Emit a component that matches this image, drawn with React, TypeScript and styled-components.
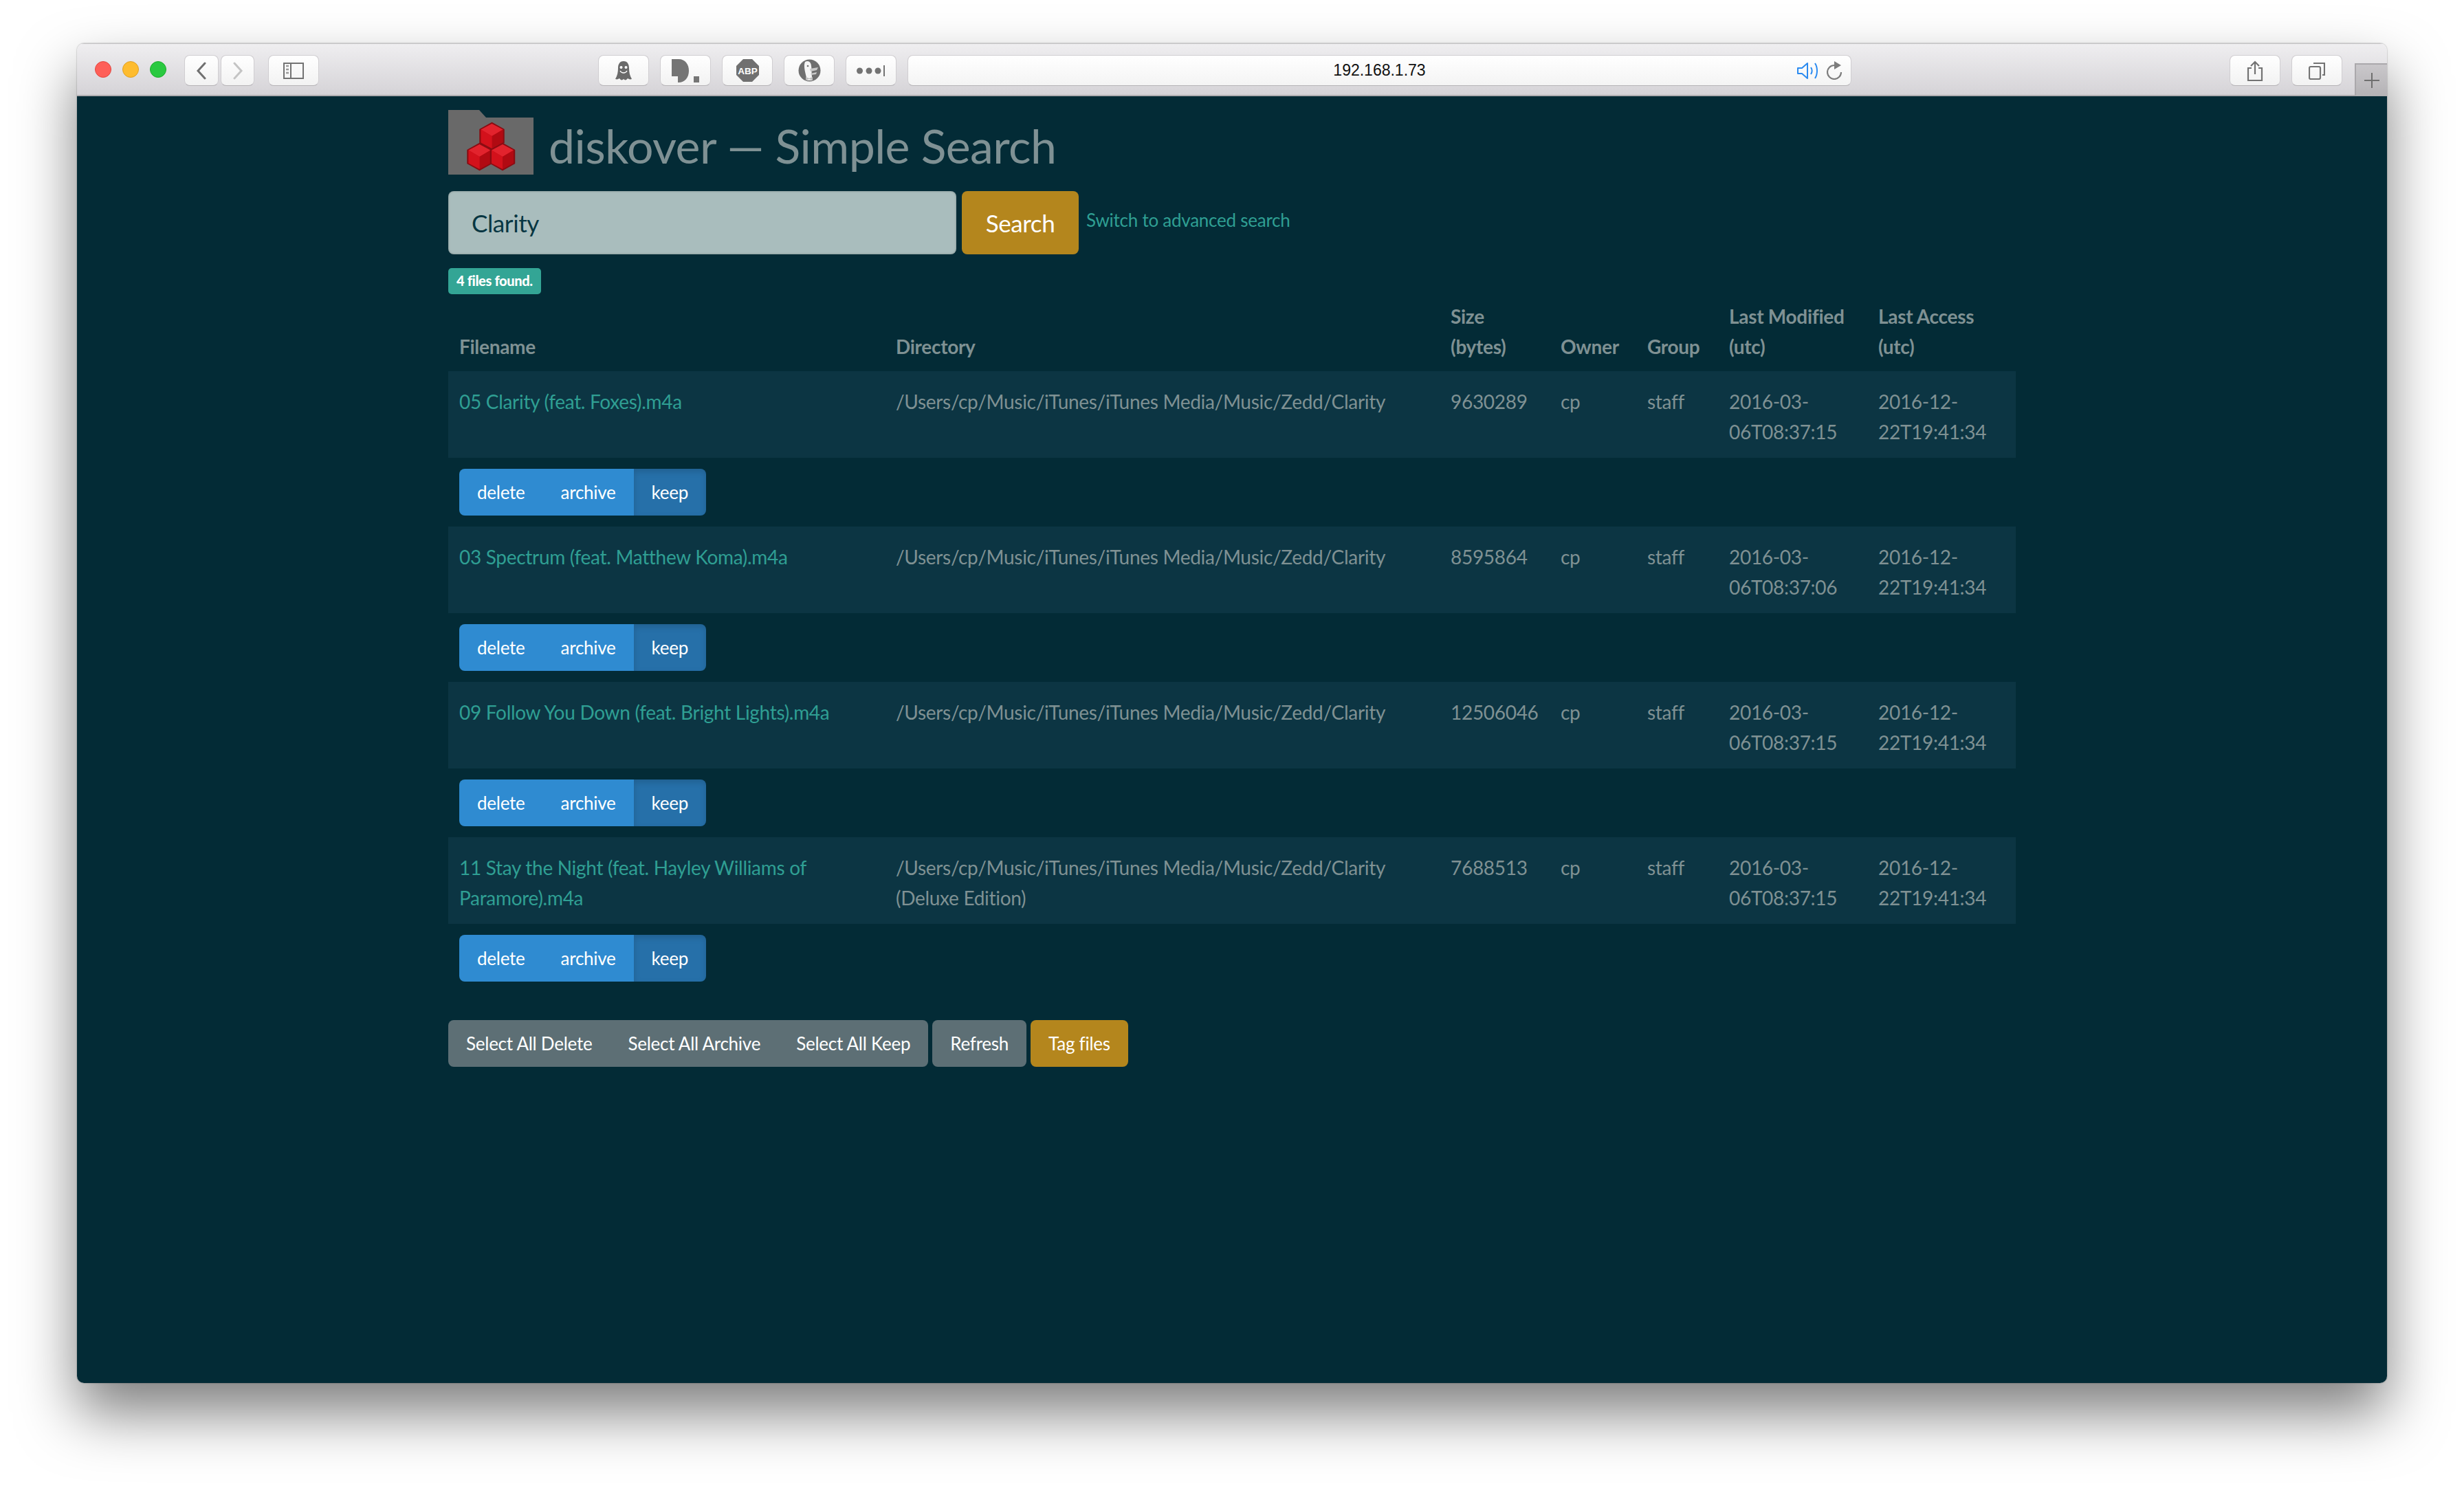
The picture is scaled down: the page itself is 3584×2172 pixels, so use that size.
import styled, { createGlobalStyle } from "styled-components";

const GlobalStyle = createGlobalStyle`
  html, body {
    margin: 0;
    padding: 0;
    background: #ffffff;
  }
`;

const Desktop = styled.div`
  width: 3584px;
  height: 2172px;
  padding: 63px 112px 160px;
  box-sizing: border-box;
  overflow: hidden;
  background: #ffffff;
`;

const Window = styled.div`
  height: 1949px;
  display: flex;
  flex-direction: column;
  border-radius: 10px;
  overflow: hidden;
  box-shadow: 0 44px 84px rgba(0, 0, 0, 0.5), 0 0 2px rgba(0, 0, 0, 0.4);
`;

const Toolbar = styled.div`
  height: 77px;
  flex: none;
  box-sizing: border-box;
  padding: 16px 0 0 26px;
  display: flex;
  align-items: flex-start;
  background: linear-gradient(#efeef0, #d5d3d7);
  border-top: 1px solid #c4c3c5;
  border-bottom: 2px solid #b0aeb1;
`;

const Lights = styled.div`
  display: flex;
  gap: 16px;
  margin: 9px 26px 0 0;
`;

const Light = styled.span<{ $color: string; $edge: string }>`
  width: 24px;
  height: 24px;
  border-radius: 50%;
  box-sizing: border-box;
  background: ${({ $color }) => $color};
  border: 1px solid ${({ $edge }) => $edge};
`;

const ToolButton = styled.div<{ $width?: number; $gap?: number }>`
  width: ${({ $width }) => $width ?? 74}px;
  height: 45px;
  flex: none;
  box-sizing: border-box;
  margin-right: ${({ $gap }) => $gap ?? 16}px;
  display: flex;
  align-items: center;
  justify-content: center;
  border-radius: 8px;
  background: linear-gradient(#ffffff, #f2f2f2);
  border: 1px solid #d0ced1;
  border-bottom-color: #b5b3b6;
`;

const Spacer = styled.div<{ $width: number }>`
  width: ${({ $width }) => $width}px;
  flex: none;
`;

const AddressBar = styled.div`
  flex: 1;
  height: 45px;
  box-sizing: border-box;
  margin-right: 550px;
  padding: 0 12px;
  position: relative;
  display: flex;
  align-items: center;
  justify-content: center;
  border-radius: 8px;
  background: linear-gradient(#ffffff, #f4f4f4);
  border: 1px solid #d0ced1;
  border-bottom-color: #b5b3b6;
  font: 23px "Liberation Sans", Arial, sans-serif;
  color: #111111;
`;

const AddressIcons = styled.div`
  position: absolute;
  right: 12px;
  top: 8px;
  display: flex;
  align-items: center;
  gap: 12px;
`;

const NewTab = styled.div`
  width: 47px;
  height: 47px;
  flex: none;
  box-sizing: border-box;
  margin: 12px 0 0 1px;
  display: flex;
  align-items: center;
  justify-content: center;
  background: linear-gradient(#c9c7ca, #b5b3b6);
  border-top: 2px solid #aaa8ab;
  border-left: 2px solid #aaa8ab;
`;

const Content = styled.main`
  flex: 1;
  background: #032b36;
  padding-top: 20px;
  font-family: Lato, "Source Sans Pro", "Noto Sans", sans-serif;
  color: #7f9193;
`;

const Container = styled.div`
  width: 2280px;
  margin: 0 auto;
`;

const Heading = styled.h1`
  margin: 0;
  height: 94px;
  display: flex;
  align-items: flex-end;
  gap: 22px;
  font-size: 68px;
  font-weight: 400;
  line-height: 84px;
  letter-spacing: -0.6px;
  color: #7f9194;
`;

const SearchForm = styled.form`
  margin-top: 24px;
  display: flex;
  gap: 8px;
`;

const SearchInput = styled.input`
  width: 739px;
  height: 92px;
  box-sizing: border-box;
  padding: 0 34px;
  border: 0;
  border-radius: 8px;
  box-shadow: inset 0 0 3px rgba(0, 0, 0, 0.3);
  background: #a9bdbd;
  color: #073642;
  font: 400 35px Lato, sans-serif;
  letter-spacing: -0.4px;
  outline: none;
`;

const SearchButton = styled.button`
  width: 170px;
  height: 92px;
  padding: 0;
  border: 0;
  border-radius: 8px;
  background: #b4861d;
  color: #ffffff;
  font: 400 35px Lato, sans-serif;
  letter-spacing: -0.4px;
`;

const SwitchLink = styled.a`
  margin: 22px 0 0 3px;
  font-size: 26px;
  line-height: 40px;
  color: #2f9f93;
  letter-spacing: -0.25px;
`;

const Badge = styled.span`
  display: block;
  width: fit-content;
  height: 38px;
  box-sizing: border-box;
  margin-top: 20px;
  padding: 0 12px;
  border-radius: 5px;
  background: #33a595;
  color: #ffffff;
  font-size: 20px;
  font-weight: 900;
  line-height: 37px;
  letter-spacing: -0.35px;
`;

const ResultTable = styled.table`
  width: 2280px;
  table-layout: fixed;
  border-collapse: collapse;
  font-size: 28px;
  line-height: 44px;
  letter-spacing: -0.3px;
`;

const HeaderCell = styled.th`
  padding: 10px 16px 14px;
  vertical-align: bottom;
  text-align: left;
  font-weight: 700;
`;

const DataRow = styled.tr`
  background: #0c3543;

  &:first-child td {
    padding-top: 22px;
  }
`;

const DataCell = styled.td`
  padding: 20px 16px 16px;
  vertical-align: top;
  overflow-wrap: anywhere;
`;

const FileLink = styled.a`
  color: #2f9f93;
`;

const ActionCell = styled.td`
  height: 100px;
  box-sizing: border-box;
  padding: 16px;
  vertical-align: top;
`;

const ButtonGroup = styled.div`
  display: inline-flex;
  border-radius: 8px;
  overflow: hidden;
`;

const ActionButton = styled.button<{ $active?: boolean }>`
  height: 68px;
  padding: 0 26px;
  border: 0;
  background: ${({ $active }) => ($active ? "#2670a9" : "#2f8bd1")};
  box-shadow: ${({ $active }) =>
    $active ? "inset 0 4px 10px rgba(0, 0, 0, 0.15)" : "none"};
  color: #ffffff;
  font: 400 26px Lato, sans-serif;
  letter-spacing: -0.25px;
`;

const BulkBar = styled.div`
  margin-top: 40px;
  display: flex;
  gap: 6px;
`;

const BulkButton = styled.button<{ $gold?: boolean }>`
  height: 68px;
  padding: 0 26px;
  border: 0;
  background: ${({ $gold }) => ($gold ? "#b4861d" : "#5d6f75")};
  border-radius: ${({ $gold }) => ($gold ? "8px" : "0")};
  color: #ffffff;
  font: 400 26px Lato, sans-serif;
  letter-spacing: -0.25px;
`;

const LoneButton = styled(BulkButton)`
  border-radius: 8px;
`;

const files = [
  {
    name: "05 Clarity (feat. Foxes).m4a",
    dir: "/Users/cp/Music/iTunes/iTunes Media/Music/Zedd/Clarity",
    size: "9630289",
    modified: "2016-03-06T08:37:15",
  },
  {
    name: "03 Spectrum (feat. Matthew Koma).m4a",
    dir: "/Users/cp/Music/iTunes/iTunes Media/Music/Zedd/Clarity",
    size: "8595864",
    modified: "2016-03-06T08:37:06",
  },
  {
    name: "09 Follow You Down (feat. Bright Lights).m4a",
    dir: "/Users/cp/Music/iTunes/iTunes Media/Music/Zedd/Clarity",
    size: "12506046",
    modified: "2016-03-06T08:37:15",
  },
  {
    name: "11 Stay the Night (feat. Hayley Williams of Paramore).m4a",
    dir: "/Users/cp/Music/iTunes/iTunes Media/Music/Zedd/Clarity (Deluxe Edition)",
    size: "7688513",
    modified: "2016-03-06T08:37:15",
  },
];

const columns = [635, 807, 160, 126, 119, 217, 216];
const GREY = "#737373";

const Cube = ({ x, y }: { x: number; y: number }) => (
  <g transform={`translate(${x} ${y})`}>
    <path d="M0-19 17-9.500V9.500L0 19-17 9.500V-9.500Z" fill="#c40d16" stroke="#8a0c12" strokeWidth="2.500" strokeLinejoin="round" />
    <path d="M0-18 16-9.500 0 0-16-9.500Z" fill="#e2232d" />
    <path d="M0 0 16-9.500V9.500L0 18Z" fill="#b10a12" />
    <path d="M0 0-16-9.500V9.500L0 18Z" fill="#d3111b" />
  </g>
);

const Logo = () => (
  <svg width="124" height="94" viewBox="0 0 124 94">
    <path d="M0 0H45L55 11H124V94H0Z" fill="#696969" />
    <Cube x={63.500} y={38} />
    <Cube x={45.500} y={68} />
    <Cube x={79} y={68} />
  </svg>
);

const BackIcon = ({ color }: { color: string }) => (
  <svg width="16" height="26" viewBox="0 0 16 26">
    <path d="M13 2 3 13 13 24" fill="none" stroke={color} strokeWidth="3" strokeLinecap="round" />
  </svg>
);

const ForwardIcon = ({ color }: { color: string }) => (
  <svg width="16" height="26" viewBox="0 0 16 26">
    <path d="M3 2 13 13 3 24" fill="none" stroke={color} strokeWidth="3" strokeLinecap="round" />
  </svg>
);

const SidebarIcon = () => (
  <svg width="30" height="24" viewBox="0 0 30 24">
    <rect x="1" y="1" width="28" height="22" fill="none" stroke={GREY} strokeWidth="2" />
    <path d="M11 1V23" stroke={GREY} strokeWidth="2" />
    <path d="M4 5H8M4 10H8M4 15H8" stroke={GREY} strokeWidth="2.500" opacity="0.7" />
  </svg>
);

const GhostIcon = () => (
  <svg width="24" height="28" viewBox="0 0 24 28">
    <path d="M12 0C18 0 20 5 20 10C20 16 21 21 24 26C21 27 20 26 18 25C16 28 14 28 12 26C10 28 8 28 6 25C4 26 3 27 0 26C3 21 4 16 4 10C4 5 6 0 12 0Z" fill="#6a6a6a" />
    <circle cx="8.500" cy="9" r="2" fill="#fff" />
    <circle cx="15.500" cy="9" r="2" fill="#fff" />
    <path d="M7 14C9 18 15 18 17 14" fill="none" stroke="#fff" strokeWidth="1.300" />
  </svg>
);

const DIcon = () => (
  <svg width="40" height="34" viewBox="0 0 40 34">
    <path d="M0 0H10C20 0 25 8 25 17C25 27 19 34 10 34H9V25H0Z" fill="#757575" />
    <path d="M32 25H40V34H32Z" fill="#757575" />
  </svg>
);

const AbpIcon = () => (
  <svg width="33" height="33" viewBox="0 0 33 33">
    <path d="M10 0H23L33 10V23L23 33H10L0 23V10Z" fill="#707070" />
    <text x="16.500" y="21.500" textAnchor="middle" fontFamily="'Liberation Sans', sans-serif" fontWeight="700" fontSize="13.500" fill="#fff">
      ABP
    </text>
  </svg>
);

const DuckIcon = () => (
  <svg width="33" height="33" viewBox="0 0 33 33">
    <circle cx="16.500" cy="16.500" r="16" fill="#6f6f6f" />
    <path d="M10 4C15 1 19 5 19 10C20 16 19 24 21 31L13 31C11 22 7 10 10 4Z" fill="#f4f4f4" />
    <circle cx="14" cy="10" r="1.300" fill="#6f6f6f" />
    <path d="M17 14 29 12 27 16 18 18Z" fill="#c9c9c9" />
    <path d="M18 21 27 19 26 22 19 23Z" fill="#c9c9c9" />
    <path d="M11 26 16 28 21 26V31L16 29 11 31Z" fill="#bdbdbd" />
  </svg>
);

const LastPassIcon = () => (
  <svg width="42" height="18" viewBox="0 0 42 18" style={{ overflow: "visible" }}>
    <circle cx="4.500" cy="9" r="4.500" fill={GREY} />
    <circle cx="18" cy="9" r="4.500" fill={GREY} />
    <circle cx="31" cy="9" r="4.500" fill={GREY} />
    <path d="M40 1V17" stroke={GREY} strokeWidth="2" />
  </svg>
);

const VolumeIcon = () => (
  <svg width="31" height="26" viewBox="0 0 31 26">
    <path d="M1 9H7L15 2V24L7 17H1Z" fill="none" stroke="#2a8af0" strokeWidth="2" strokeLinejoin="round" />
    <path d="M20 8C22 11 22 15 20 18" fill="none" stroke="#2a8af0" strokeWidth="2" />
    <path d="M26 2C30 8 30 18 26 24" fill="none" stroke="#2a8af0" strokeWidth="2" />
  </svg>
);

const ReloadIcon = () => (
  <svg width="23" height="27" viewBox="0 0 23 27">
    <path d="M11 6A10 10 0 1 0 21 16" fill="none" stroke="#7d7d7d" strokeWidth="2.200" />
    <path d="M11 0 21 6 11 12Z" fill="#7d7d7d" />
  </svg>
);

const ShareIcon = () => (
  <svg width="24" height="30" viewBox="0 0 24 30">
    <path d="M7 11H2V29H22V11H17" fill="none" stroke={GREY} strokeWidth="2.200" />
    <path d="M12 20V2M6 8 12 2 18 8" fill="none" stroke={GREY} strokeWidth="2.200" />
  </svg>
);

const TabsIcon = () => (
  <svg width="24" height="26" viewBox="0 0 24 26">
    <rect x="1" y="7" width="16" height="18" rx="2" fill="none" stroke={GREY} strokeWidth="2.200" />
    <path d="M7 2H23V19H20" fill="none" stroke={GREY} strokeWidth="2.200" />
  </svg>
);

const PlusIcon = () => (
  <svg width="24" height="24" viewBox="0 0 24 24">
    <path d="M12 1V23M1 12H23" stroke="#6f6f6f" strokeWidth="2" />
  </svg>
);

const App = () => (
  <>
    <GlobalStyle />
    <Desktop>
      <Window>
        <Toolbar>
          <Lights>
            <Light $color="#fe5f58" $edge="#e2463f" />
            <Light $color="#febc2f" $edge="#dfa023" />
            <Light $color="#2ac940" $edge="#1dad2b" />
          </Lights>
          <ToolButton $width={50} $gap={3}>
            <BackIcon color="#707070" />
          </ToolButton>
          <ToolButton $width={49} $gap={20}>
            <ForwardIcon color="#c4c4c4" />
          </ToolButton>
          <ToolButton>
            <SidebarIcon />
          </ToolButton>
          <Spacer $width={390} />
          <ToolButton>
            <GhostIcon />
          </ToolButton>
          <ToolButton>
            <DIcon />
          </ToolButton>
          <ToolButton>
            <AbpIcon />
          </ToolButton>
          <ToolButton>
            <DuckIcon />
          </ToolButton>
          <ToolButton>
            <LastPassIcon />
          </ToolButton>
          <AddressBar>
            192.168.1.73
            <AddressIcons>
              <VolumeIcon />
              <ReloadIcon />
            </AddressIcons>
          </AddressBar>
          <ToolButton>
            <ShareIcon />
          </ToolButton>
          <ToolButton $gap={17}>
            <TabsIcon />
          </ToolButton>
          <NewTab>
            <PlusIcon />
          </NewTab>
        </Toolbar>
        <Content>
          <Container>
            <Heading>
              <Logo />
              diskover — Simple Search
            </Heading>
            <SearchForm>
              <SearchInput defaultValue="Clarity" readOnly />
              <SearchButton type="button">Search</SearchButton>
              <SwitchLink>Switch to advanced search</SwitchLink>
            </SearchForm>
            <Badge>4 files found.</Badge>
            <ResultTable>
              <colgroup>
                {columns.map((width) => (
                  <col key={width} style={{ width }} />
                ))}
              </colgroup>
              <thead>
                <tr>
                  <HeaderCell>Filename</HeaderCell>
                  <HeaderCell>Directory</HeaderCell>
                  <HeaderCell>Size (bytes)</HeaderCell>
                  <HeaderCell>Owner</HeaderCell>
                  <HeaderCell>Group</HeaderCell>
                  <HeaderCell>Last Modified (utc)</HeaderCell>
                  <HeaderCell>Last Access (utc)</HeaderCell>
                </tr>
              </thead>
              {files.map((file) => (
                <tbody key={file.name}>
                  <DataRow>
                    <DataCell>
                      <FileLink>{file.name}</FileLink>
                    </DataCell>
                    <DataCell>{file.dir}</DataCell>
                    <DataCell>{file.size}</DataCell>
                    <DataCell>cp</DataCell>
                    <DataCell>staff</DataCell>
                    <DataCell>{file.modified}</DataCell>
                    <DataCell>2016-12-22T19:41:34</DataCell>
                  </DataRow>
                  <tr>
                    <ActionCell colSpan={7}>
                      <ButtonGroup>
                        <ActionButton>delete</ActionButton>
                        <ActionButton>archive</ActionButton>
                        <ActionButton $active>keep</ActionButton>
                      </ButtonGroup>
                    </ActionCell>
                  </tr>
                </tbody>
              ))}
            </ResultTable>
            <BulkBar>
              <ButtonGroup>
                <BulkButton>Select All Delete</BulkButton>
                <BulkButton>Select All Archive</BulkButton>
                <BulkButton>Select All Keep</BulkButton>
              </ButtonGroup>
              <LoneButton>Refresh</LoneButton>
              <BulkButton $gold>Tag files</BulkButton>
            </BulkBar>
          </Container>
        </Content>
      </Window>
    </Desktop>
  </>
);

export default App;
